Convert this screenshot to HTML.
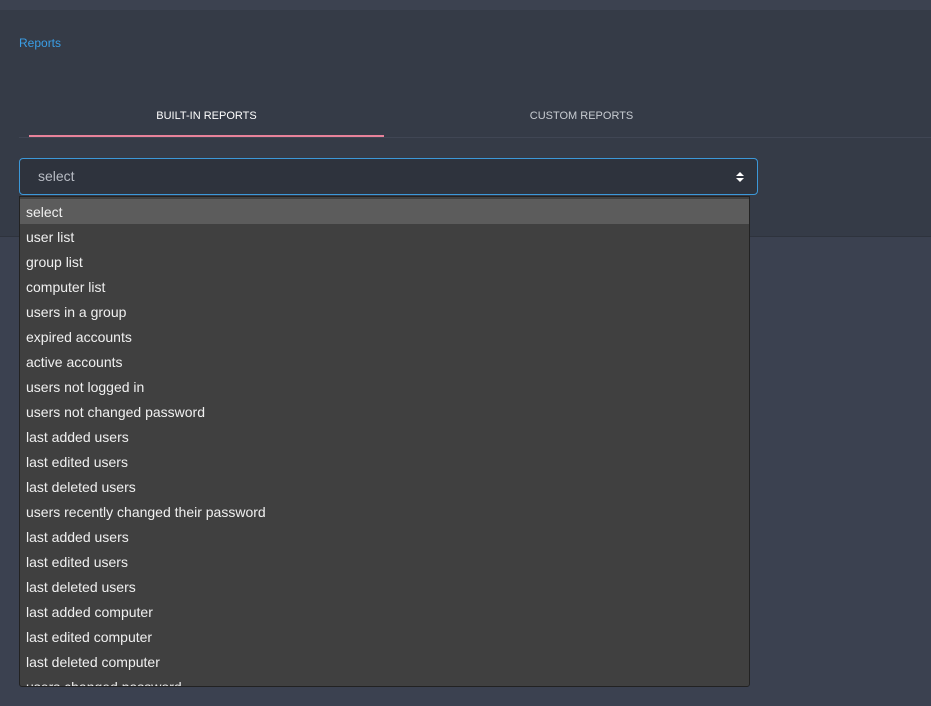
<!DOCTYPE html>
<html><head><style>
body{margin:0;width:931px;height:706px;background:#3b4150;font-family:"Liberation Sans",sans-serif;position:relative;overflow:hidden}
.top{position:absolute;left:0;top:0;width:931px;height:10px;background:#3c4250}
.panel{position:absolute;left:0;top:10px;width:931px;height:226px;background:#353b47;border-bottom:1px solid #2e333d}
.crumb{position:absolute;left:19px;top:36px;font-size:12px;color:#3a9ee6}
.tab{position:absolute;top:110px;font-size:11px;color:#fff;text-align:center}
.line{position:absolute;left:19px;top:137px;width:912px;height:1px;background:#404654}
.ul{position:absolute;left:29px;top:135px;width:355px;height:2px;background:#e8829a}
.sel{position:absolute;left:19px;top:158px;width:737px;height:35px;border:1px solid #3c98d8;border-radius:4px;background:#2e333d}
.sel span{position:absolute;left:18px;top:9px;font-size:14px;color:#b8bcc4}
.arr{position:absolute;right:12px;top:11px}
.list{position:absolute;left:19px;top:196px;width:731px;height:491px;background:#404040;border:1px solid #222;border-radius:0 0 3px 3px;overflow:hidden;padding-top:2px;box-sizing:border-box}
.list div{height:25px;line-height:27px;padding-left:6px;font-size:14px;color:#f0f0f0;font-family:"Liberation Sans",sans-serif}
.list div.h{background:#5c5c5c}
</style></head><body>
<div class="top"></div>
<div class="panel"></div>
<div class="crumb">Reports</div>
<div class="tab" style="left:29px;width:355px">BUILT-IN REPORTS</div>
<div class="tab" style="left:404px;width:355px;color:#c8ccd2">CUSTOM REPORTS</div>
<div class="line"></div>
<div class="ul"></div>
<div class="sel"><span>select</span>
<svg class="arr" width="10" height="14" viewBox="0 0 10 14"><path d="M1 6 L5 2 L9 6Z M1 8 L5 12 L9 8Z" fill="#fff"/></svg></div>
<div class="list">
<div class="h">select</div>
<div>user list</div>
<div>group list</div>
<div>computer list</div>
<div>users in a group</div>
<div>expired accounts</div>
<div>active accounts</div>
<div>users not logged in</div>
<div>users not changed password</div>
<div>last added users</div>
<div>last edited users</div>
<div>last deleted users</div>
<div>users recently changed their password</div>
<div>last added users</div>
<div>last edited users</div>
<div>last deleted users</div>
<div>last added computer</div>
<div>last edited computer</div>
<div>last deleted computer</div>
<div>users changed password</div>
</div>
</body></html>
